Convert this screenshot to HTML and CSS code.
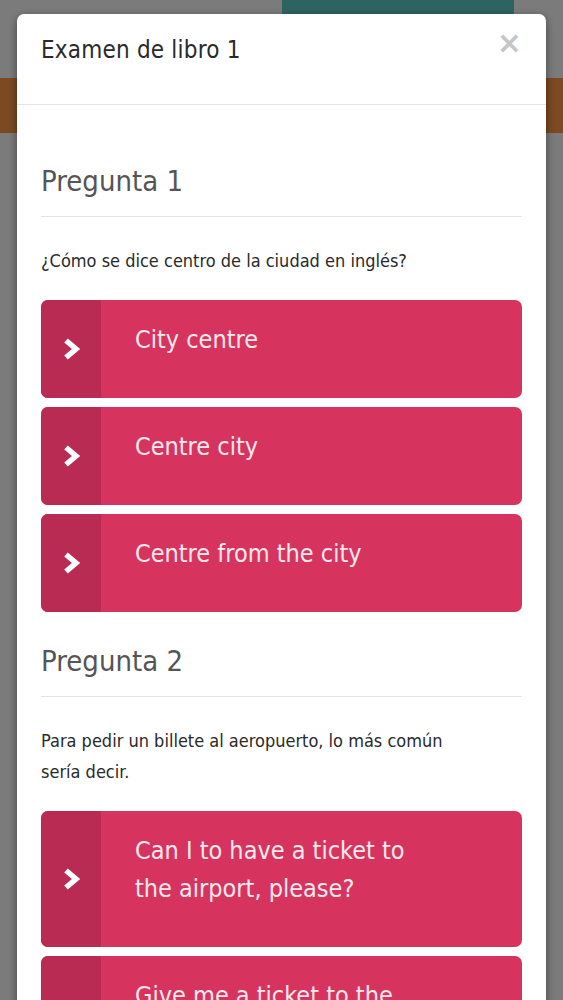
FILE: index.html
```html
<!DOCTYPE html>
<html lang="es">
<head>
<meta charset="utf-8">
<title>Examen de libro 1</title>
<link rel="stylesheet" href="styles.css">
</head>
<body>
<div class="backdrop">
  <div class="page-top"><div class="teal"></div></div>
  <div class="orange"></div>
</div>
<div class="modal">
  <div class="modal-header">
    <h4 class="modal-title">Examen de libro 1</h4>
    <span class="close">&times;</span>
  </div>
  <div class="modal-body">
    <section class="question">
      <h2 class="q-title">Pregunta 1</h2>
      <p class="q-text">¿Cómo se dice centro de la ciudad en inglés?</p>
      <div class="answers">
        <button class="answer"><span class="arrow"><svg class="chev" viewBox="0 0 20 24"><path d="M4 3.5 L14 12 L4 20.5" fill="none" stroke="#fff" stroke-width="5.5" stroke-linejoin="miter"/></svg></span><span class="label">City centre</span></button>
        <button class="answer"><span class="arrow"><svg class="chev" viewBox="0 0 20 24"><path d="M4 3.5 L14 12 L4 20.5" fill="none" stroke="#fff" stroke-width="5.5" stroke-linejoin="miter"/></svg></span><span class="label">Centre city</span></button>
        <button class="answer"><span class="arrow"><svg class="chev" viewBox="0 0 20 24"><path d="M4 3.5 L14 12 L4 20.5" fill="none" stroke="#fff" stroke-width="5.5" stroke-linejoin="miter"/></svg></span><span class="label">Centre from the city</span></button>
      </div>
    </section>
    <section class="question">
      <h2 class="q-title">Pregunta 2</h2>
      <p class="q-text">Para pedir un billete al aeropuerto, lo más común<br>sería decir.</p>
      <div class="answers">
        <button class="answer"><span class="arrow"><svg class="chev" viewBox="0 0 20 24"><path d="M4 3.5 L14 12 L4 20.5" fill="none" stroke="#fff" stroke-width="5.5" stroke-linejoin="miter"/></svg></span><span class="label">Can I to have a ticket to<br>the airport, please?</span></button>
        <button class="answer"><span class="arrow"><svg class="chev" viewBox="0 0 20 24"><path d="M4 3.5 L14 12 L4 20.5" fill="none" stroke="#fff" stroke-width="5.5" stroke-linejoin="miter"/></svg></span><span class="label">Give me a ticket to the<br>airport.</span></button>
      </div>
    </section>
  </div>
</div>
</body>
</html>
```
FILE: styles.css
```css
html, body {
  margin: 0;
  padding: 0;
  height: 100%;
  overflow: hidden;
}
body {
  background: #7b7b7b;
  font-family: "Liberation Sans Narrow", "DejaVu Sans Condensed", "Roboto", sans-serif;
  position: relative;
}
.backdrop {
  display: flex;
  flex-direction: column;
}
.page-top {
  height: 14px;
  display: flex;
}
.teal {
  margin-left: 282px;
  width: 232px;
  background: #2f6362;
}
.orange {
  margin-top: 64px;
  height: 55px;
  background: #7b4a22;
}
.modal {
  position: absolute;
  left: 17px;
  top: 14px;
  width: 529px;
  height: 1100px;
  background: #fff;
  border-radius: 7px;
  box-shadow: 0 3px 9px rgba(0,0,0,0.45);
}
.modal-header {
  height: 90px;
  border-bottom: 1px solid #e5e5e5;
  display: flex;
  justify-content: space-between;
  align-items: flex-start;
  padding: 0 24px;
}
.modal-title {
  margin: 22px 0 0;
  font-size: 24px;
  font-weight: normal;
  color: #2a2a2a;
  letter-spacing: 0.2px;
}
.close {
  margin-top: 14px;
  margin-right: 0;
  font-family: "DejaVu Sans", sans-serif;
  font-size: 30px;
  font-weight: bold;
  color: #c6c6c6;
  line-height: 1;
}
.modal-body {
  padding: 59px 24px 0;
}
.question {
  margin-bottom: 32px;
}
.q-title {
  margin: 0;
  font-size: 29px;
  font-weight: normal;
  color: #555;
  padding-bottom: 17px;
  border-bottom: 1px solid #e3e3e3;
  line-height: 1.2;
}
.q-text {
  margin: 28px 0 24px;
  font-size: 18px;
  line-height: 31px;
  color: #2a2a2a;
}
.answers {
  display: flex;
  flex-direction: column;
  gap: 9px;
}
.answer {
  display: flex;
  align-items: stretch;
  width: 100%;
  padding: 0;
  border: 0;
  border-radius: 7px;
  overflow: hidden;
  background: #d6345e;
  text-align: left;
  font-family: inherit;
  cursor: pointer;
}
.arrow {
  width: 60px;
  flex: none;
  background: #b92b52;
  display: flex;
  align-items: center;
  justify-content: center;
  padding-left: 2px;
  box-sizing: border-box;
}
.chev {
  width: 20px;
  height: 24px;
  display: block;
}
.label {
  padding: 21px 20px 39px 34px;
  font-size: 25px;
  line-height: 38px;
  color: #fbe9ee;
}
```
